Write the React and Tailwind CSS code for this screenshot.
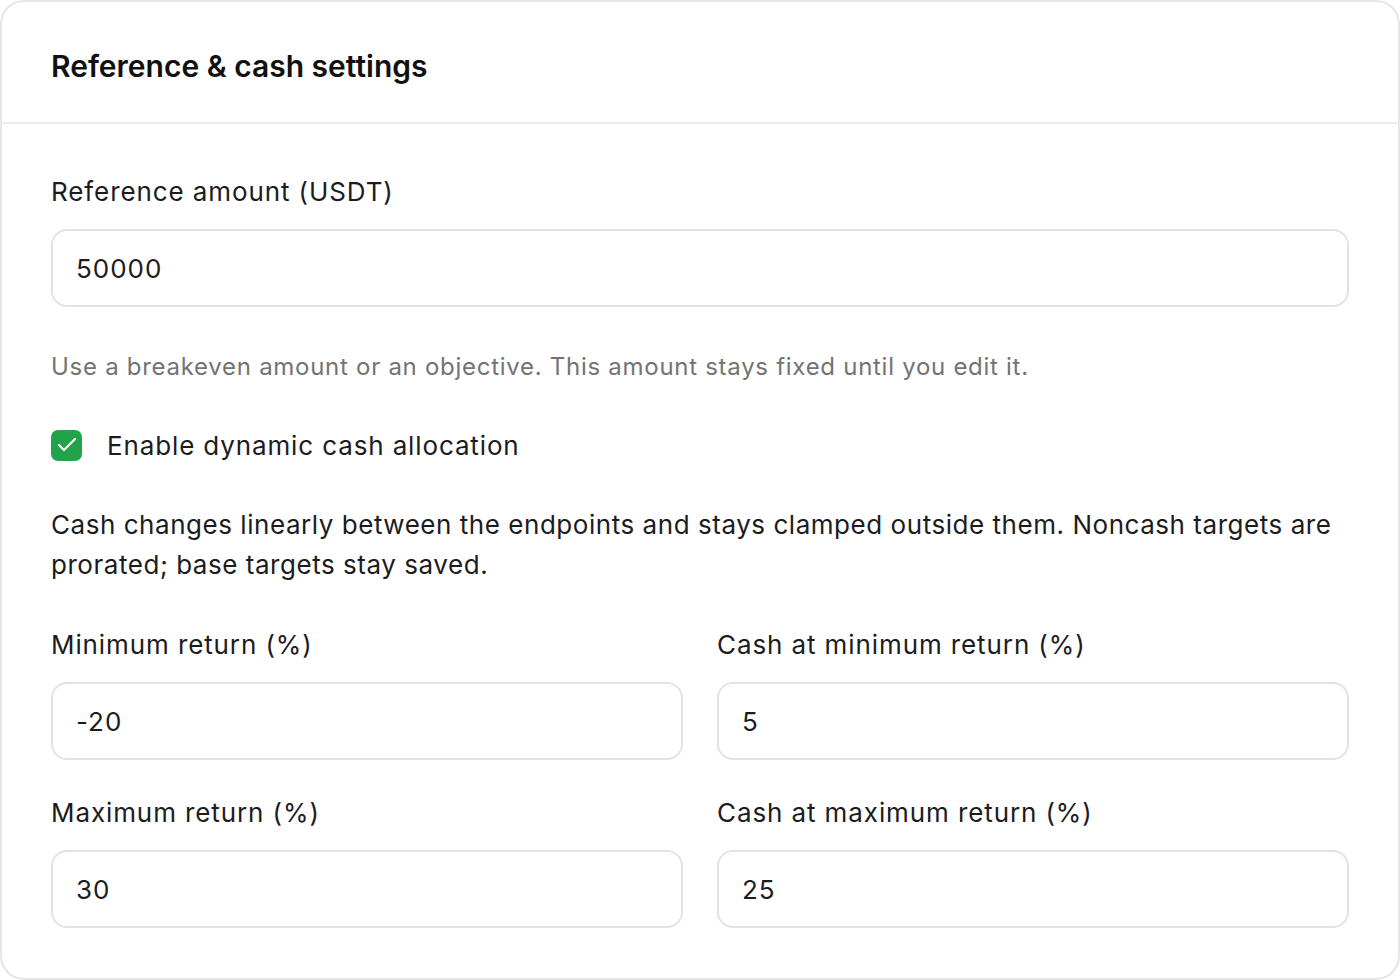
import { Check } from 'lucide-react';

const font = { fontFamily: 'Inter, "Noto Sans", sans-serif' };

function Field({ label, value }) {
  return (
    <div className="flex flex-col">
      <label className="text-[26px] leading-[36px] tracking-[0.9px] text-[#1c1c1e] mb-[19px]">{label}</label>
      <div className="h-[78px] rounded-[16px] border-2 border-[#e3e3e3] bg-white flex items-center px-[23px]">
        <span className="text-[26px] tracking-[1px] text-[#1c1c1e]">{value}</span>
      </div>
    </div>
  );
}

export default function App() {
  return (
    <div className="w-[1400px] h-[980px] bg-white" style={font}>
      <div className="h-full rounded-[24px] border-2 border-[#e6e6e6] bg-white flex flex-col">
        {/* Header */}
        <div className="h-[122px] border-b-2 border-[#ececec] flex items-center px-[49px]">
          <h2 className="text-[30px] font-semibold text-[#111111] tracking-[0px] pt-[8px]">
            Reference &amp; cash settings
          </h2>
        </div>

        {/* Body */}
        <div className="px-[49px] pt-[50px] pb-[48px] flex flex-col">
          <Field label="Reference amount (USDT)" value="50000" />

          <p className="mt-[42px] text-[24px] leading-[36px] text-[#737373] tracking-[0.72px]">
            Use a breakeven amount or an objective. This amount stays fixed until you edit it.
          </p>

          <div className="mt-[42px] h-[36px] flex items-center gap-[25px]">
            <div className="w-[31px] h-[31px] rounded-[7px] bg-[#22a34a] flex items-center justify-center">
              <Check className="w-[24px] h-[24px] text-white" strokeWidth={2.2} />
            </div>
            <span className="text-[26px] tracking-[0.87px] text-[#1c1c1e]">Enable dynamic cash allocation</span>
          </div>

          <p className="mt-[42px] text-[26px] leading-[40px] tracking-[0.54px] text-[#1c1c1e]">
            Cash changes linearly between the endpoints and stays clamped outside them. Noncash targets are prorated; base targets stay saved.
          </p>

          <div className="mt-[42px] grid grid-cols-2 gap-x-[34px] gap-y-[35px]">
            <Field label="Minimum return (%)" value="-20" />
            <Field label="Cash at minimum return (%)" value="5" />
            <Field label="Maximum return (%)" value="30" />
            <Field label="Cash at maximum return (%)" value="25" />
          </div>
        </div>
      </div>
    </div>
  );
}
